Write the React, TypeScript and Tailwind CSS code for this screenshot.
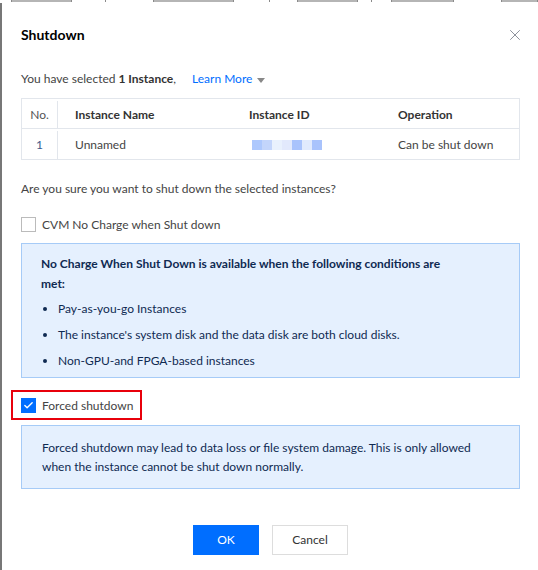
import { X, Check } from "lucide-react";

const idBlocks = ["#adc8fd", "#c3d5fb", "#e9f1fd", "#e2e9fc", "#a9c3fc", "#e1eafd", "#a9c3fc"];

const conditions = [
    "Pay-as-you-go Instances",
    "The instance's system disk and the data disk are both cloud disks.",
    "Non-GPU-and FPGA-based instances",
];

// 背景テーブルの見切れ部分 (幅, 文字の残りかどうか)
const strip: [number, boolean][] = [
    [12, false], [60, true], [34, false], [48, false], [80, true], [36, false],
    [28, false], [60, true], [14, false], [20, false], [62, true], [48, false], [36, true],
];

export default function App() {
    return (
        <div className="flex h-[570px] w-[538px] flex-col overflow-hidden bg-white font-['Lato','Liberation_Sans',sans-serif] text-[12px] text-[#444]">
            {/* 背景の切れ端 */}
            <div className="flex h-[3px] shrink-0 items-start">
                {strip.map(([w, txt], i) => (
                    <div
                        key={i}
                        className={`h-[2px] shrink-0 border-r border-[#8a8a8a] ${txt ? "bg-[#b5b5b5]" : "bg-white"}`}
                        style={{ width: w }}
                    />
                ))}
            </div>

            <div className="flex flex-1 flex-col border-l-2 border-[#777] pl-[19px]">
                {/* ヘッダー */}
                <div className="mt-[22px] flex h-[20px] w-[499px] items-center justify-between">
                    <h3 className="text-[14px] font-bold leading-[20px] text-black">Shutdown</h3>
                    <X size={18} strokeWidth={1.3} className="-mr-[4px] text-[#8a8f99]" />
                </div>

                <p className="mt-[25px] flex h-[18px] items-center leading-[18px]">
                    <span>You have selected</span>
                    <span className="ml-[3px] font-bold text-[#333]">1 Instance</span>
                    <span>,</span>
                    <span className="ml-[16px] text-[#006eff]">Learn More</span>
                    <span className="ml-[5px] mt-[2px] h-0 w-0 border-x-[4px] border-t-[5px] border-x-transparent border-t-[#888]" />
                </p>

                {/* インスタンス一覧 */}
                <div className="mt-[10px] w-[499px] border border-[#e2e6ec]">
                    <div className="flex h-[30px] items-center border-b border-[#e2e6ec] pt-[2px] font-bold text-[#333]">
                        <div className="flex h-full w-[36px] items-center justify-center border-r border-[#e2e6ec] font-normal text-[#555]">
                            No.
                        </div>
                        <div className="w-[191px] pl-[17px]">Instance Name</div>
                        <div className="w-[149px]">Instance ID</div>
                        <div className="flex-1">Operation</div>
                    </div>
                    <div className="flex h-[30px] items-center pt-[2px]">
                        <div className="flex h-full w-[36px] items-center justify-center border-r border-[#e2e6ec] text-[#3d5a8c]">
                            1
                        </div>
                        <div className="w-[191px] pl-[17px]">Unnamed</div>
                        <div className="flex w-[149px] pl-[3px]">
                            {idBlocks.map((c, i) => (
                                <span key={i} className="h-[10px] w-[10px]" style={{ backgroundColor: c }} />
                            ))}
                        </div>
                        <div className="flex-1">Can be shut down</div>
                    </div>
                </div>

                <p className="mt-[20px] leading-[18px]">Are you sure you want to shut down the selected instances?</p>

                <label className="mt-[19px] flex h-[15px] items-center gap-[6px]">
                    <span className="h-[15px] w-[15px] border border-[#bbb] bg-white" />
                    <span>CVM No Charge when Shut down</span>
                </label>

                {/* 条件 */}
                <div className="mt-[11px] w-[499px] border border-[#a6cbf7] bg-[#e5f0fe] pb-[6px] pl-[19px] pr-[60px] pt-[10px] text-[#0f2a52]">
                    <p className="font-bold leading-[20px]">
                        No Charge When Shut Down is available when the following conditions are met:
                    </p>
                    <ul className="mt-[5px] flex flex-col gap-[6px]">
                        {conditions.map((c) => (
                            <li key={c} className="flex h-[20px] items-center">
                                <span className="ml-[2px] h-[4px] w-[4px] rounded-full bg-[#0f2a52]" />
                                <span className="ml-[11px]">{c}</span>
                            </li>
                        ))}
                    </ul>
                </div>

                {/* 強制シャットダウン */}
                <div className="relative mt-[20px] flex h-[15px] w-fit items-center gap-[6px]">
                    <span className="flex h-[15px] w-[15px] items-center justify-center bg-[#006eff]">
                        <Check size={11} strokeWidth={3} className="text-white" />
                    </span>
                    <span>Forced shutdown</span>
                    <div className="absolute -bottom-[7px] -left-[10px] -right-[9px] -top-[8px] border-2 border-[#e8000b]" />
                </div>

                <div className="mt-[12px] w-[499px] border border-[#a6cbf7] bg-[#e5f0fe] pb-[12px] pl-[20px] pr-[30px] pt-[12px] leading-[19px] text-[#0f2a52]">
                    Forced shutdown may lead to data loss or file system damage. This is only allowed when the instance cannot be shut down normally.
                </div>

                {/* ボタン */}
                <div className="mt-[36px] flex w-[499px] justify-center gap-[13px]">
                    <button type="button" className="h-[30px] w-[66px] bg-[#006eff] text-white">
                        OK
                    </button>
                    <button type="button" className="h-[30px] w-[76px] border border-[#ddd] bg-white text-[#333]">
                        Cancel
                    </button>
                </div>
            </div>
        </div>
    );
}
